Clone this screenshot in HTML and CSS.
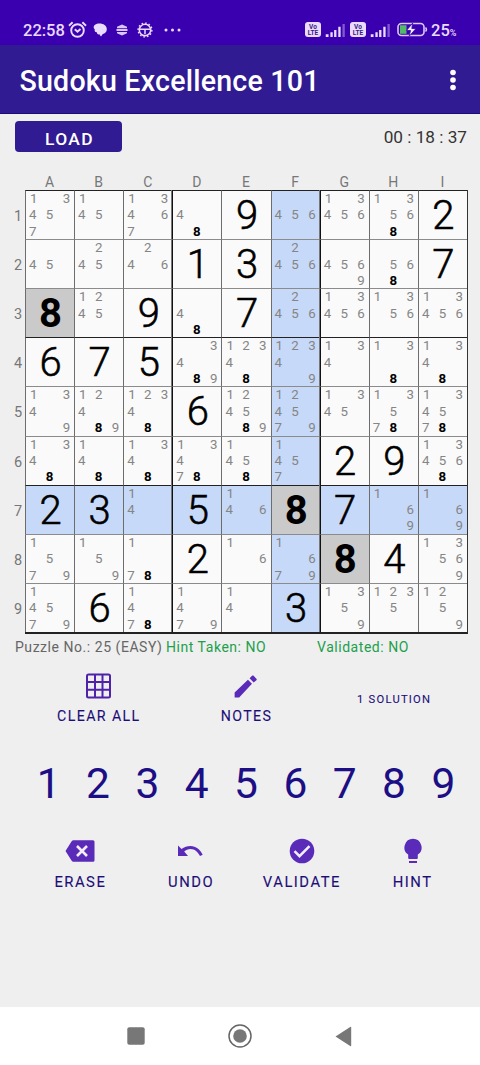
FILE: index.html
```html
<!DOCTYPE html>
<html lang="en">
<head>
<meta charset="utf-8">
<title>Sudoku Excellence 101</title>
<link rel="stylesheet" href="styles.css">
</head>
<body>
<div class="screen">
  <header class="status">
    <div class="status-left">
      <span class="clock">22:58</span>
      <svg class="i-alarm" width="19" height="18" viewBox="0 0 19 18" fill="none" stroke="#eadcff" stroke-width="1.9"><circle cx="9.5" cy="9.5" r="6.3"/><path d="M1 4.7L4.6 1.3M14.4 1.3L18 4.7M6.8 8.2l2.7 2.6 3-2.8"/></svg>
      <svg class="i-chat" width="14" height="14" viewBox="0 0 14 14" fill="#eadcff"><path d="M4 .8C9-.3 13.700 2 13.800 6c.1 3-2 4.500-4 5L8 13.500 6.300 11.300C5 11.800 3.800 10.800 3.800 9.300 2 9.300 1.200 7.800 1.800 6.300 0 5 0 2 4 .8z"/></svg>
      <svg class="i-stack" width="12" height="12" viewBox="0 0 12 12" fill="#d9c5fb"><path d="M6 .5l5 2.200v1.500H1V2.700zM.5 5h11v2H.5zM1 8h10v1.300L6 11.500 1 9.300z"/></svg>
      <svg class="i-gear" width="16" height="16" viewBox="0 0 16 16" fill="none" stroke="#eadcff"><circle cx="8" cy="8" r="5.700" stroke-width="1.600"/><circle cx="8" cy="8" r="6.900" stroke-width="1.400" stroke-dasharray="1.600 2"/><path d="M3 7.200h10M8 7.200v5" stroke-width="1.500"/></svg>
      <svg class="i-dots" width="17" height="4" viewBox="0 0 17 4" fill="#eadcff"><circle cx="2" cy="2" r="1.500"/><circle cx="8.500" cy="2" r="1.500"/><circle cx="15" cy="2" r="1.500"/></svg>
    </div>
    <div class="status-right">
      <span class="volte"><b>Vo</b><b>LTE</b></span>
      <svg class="signal" width="21" height="14" viewBox="0 0 21 14" fill="#eadcff"><path d="M0 11h3v3H0zM5 9h2.500v5H5zM9 6.500h2.500V14H9zM13.500 3H16v11h-2.500z"/><path d="M18 0h2.500v14H18z" opacity=".4"/></svg>
      <span class="volte"><b>Vo</b><b>LTE</b></span>
      <svg class="signal" width="21" height="14" viewBox="0 0 21 14" fill="#eadcff"><path d="M0 11h3v3H0zM5 9h2.500v5H5zM9 6.500h2.500V14H9zM13.500 3H16v11h-2.500z"/><path d="M18 0h2.500v14H18z" opacity=".4"/></svg>
      <svg class="battery" width="31" height="15" viewBox="0 0 31 15"><rect x="1" y="1.500" width="26" height="12" rx="3.500" fill="none" stroke="#d9caf5" stroke-width="1.600"/><path d="M3 3.200h6.500v8.600H3z" fill="#55b768"/><path d="M28.500 5.500q1.800 2 0 4" stroke="#d9caf5" stroke-width="1.500" fill="none"/><path d="M15.700 1L9.500 8.500h4l-1.300 5.800L19 6.500h-4.200z" fill="#f4edff" stroke="#3a00b0" stroke-width=".8"/></svg>
      <span class="charge">25<small>%</small></span>
    </div>
  </header>
  <div class="appbar">
    <h1>Sudoku Excellence 101</h1>
    <svg width="6" height="22" viewBox="0 0 6 22" fill="#fff"><circle cx="3" cy="3.500" r="2.800"/><circle cx="3" cy="11" r="2.800"/><circle cx="3" cy="18.500" r="2.800"/></svg>
  </div>
  <div class="toolbar">
    <button class="load">LOAD</button>
    <span class="timer">00 : 18 : 37</span>
  </div>
  <div class="play">
    <div class="cols" id="cols"></div>
    <div class="rows" id="rows"></div>
    <div class="board" id="board"></div>
  </div>
  <div class="info">
    <span class="puzzle">Puzzle No.: 25 (EASY)</span>
    <span class="hint-taken">Hint Taken: NO</span>
    <span class="validated">Validated: NO</span>
  </div>
  <div class="actions top">
    <div class="action">
      <svg width="26" height="26" viewBox="0 0 26 26" fill="none" stroke="#4f22ab" stroke-width="2"><rect x="1" y="1.500" width="23" height="23" rx="1.500"/><path d="M9 1.500v23M16.500 1.500v23M1 9h23M1 16.700h23"/></svg>
      <span>CLEAR ALL</span>
    </div>
    <div class="action">
      <svg width="26" height="26" viewBox="0 0 24 24" fill="#5a2ab8"><path d="M1.500 22.500v-4.500L13.800 6.300l3.700 3.700L5.700 22.500zM15.300 4.900l2.300-2.300c.4-.4 1-.4 1.400 0l2.600 2.600c.4.400.4 1 0 1.400L19.100 8.700z"/></svg>
      <span>NOTES</span>
    </div>
    <div class="action solution"><span>1 SOLUTION</span></div>
  </div>
  <div class="pad"><span>1</span><span>2</span><span>3</span><span>4</span><span>5</span><span>6</span><span>7</span><span>8</span><span>9</span></div>
  <div class="actions bottom">
    <div class="action">
      <svg width="30" height="26" viewBox="0 0 30 26"><path d="M8.500 2.200H28q1.500 0 1.500 1.500v18.500q0 1.500-1.500 1.500H8.500Q7.300 23.700 6.500 22.500L.5 13l6-9.500q.8-1.300 2-1.300z" fill="#5a2ab8"/><path d="M12 8l10 10M22 8L12 18" stroke="#f3eefb" stroke-width="2.600"/></svg>
      <span>ERASE</span>
    </div>
    <div class="action">
      <svg width="28" height="26" viewBox="0 0 28 26"><path d="M1 7.500l3.500 3.400C7.300 9.200 10 8 13.500 8c5.500 0 9.800 3.700 12.200 8.700l-2.700 1.300c-2.200-4.200-5.200-7-9.500-7-2.600 0-4.500.9-6.300 2.400L11 18H1z" fill="#5a2ab8"/></svg>
      <span>UNDO</span>
    </div>
    <div class="action">
      <svg width="26" height="26" viewBox="0 0 26 26"><circle cx="13" cy="13" r="12.300" fill="#5a2ab8"/><path d="M5.500 13.200l5 5L20.500 8.200" stroke="#f3eefb" stroke-width="2.500" fill="none"/></svg>
      <span>VALIDATE</span>
    </div>
    <div class="action">
      <svg width="18" height="26" viewBox="0 0 18 26" fill="#5a2ab8"><path d="M9 .8a8.600 8.600 0 0 0-4.800 15.700V20q0 1 1 1h7.600q1 0 1-1v-3.500A8.600 8.600 0 0 0 9 .8zM5 23h8v2H5z"/></svg>
      <span>HINT</span>
    </div>
  </div>
  <nav class="navbar">
    <svg width="18" height="18" viewBox="0 0 18 18"><rect x=".3" y=".3" width="17.400" height="17.400" rx="2" fill="#777"/></svg>
    <svg width="24" height="24" viewBox="0 0 24 24"><circle cx="12" cy="12" r="11" fill="none" stroke="#666" stroke-width="1.500"/><circle cx="12" cy="12" r="6.800" fill="#777"/></svg>
    <svg width="17" height="21" viewBox="0 0 17 21"><path d="M.5 10.500L15.200.9q1-.5 1 .5v18.200q0 1-1 .5z" fill="#777"/></svg>
  </nav>
</div>
<script src="board.js"></script>
</body>
</html>
```
FILE: styles.css
```css
* { box-sizing: border-box; }
body { margin: 0; font-family: Roboto, "Liberation Sans", sans-serif; background: #efefef; }
.screen { width: 480px; height: 1065px; display: flex; flex-direction: column; overflow: hidden; }

.status { height: 45px; flex: none; background: #3a00b0; color: #eadcff; display: flex; justify-content: space-between; padding: 14px 23px 0; }
.status-left, .status-right { display: flex; align-items: center; height: 31px; }
.clock { font-size: 16.5px; font-weight: 500; width: 44px; padding-top: 1px; }
.i-alarm { margin-left: 1px; }
.i-chat { margin-left: 6px; }
.i-stack { margin-left: 9px; }
.i-gear { margin-left: 9px; }
.i-dots { margin-left: 11px; }
.volte { width: 16px; height: 15px; border-radius: 3px; background: #eadcff; color: #3a1a80; display: flex; flex-direction: column; align-items: center; justify-content: center; font-size: 6.5px; line-height: 6px; }
.signal { margin: 0 4px; padding-top: 1px; }
.battery { margin-left: 2px; }
.charge { margin-left: 3px; font-size: 16.500px; font-weight: 500; width: 26px; white-space: nowrap; padding-top: 1px; }
.charge small { font-size: 9px; }

.appbar { height: 69px; flex: none; background: #301b92; border-bottom: 1px solid #1e0a78; display: flex; align-items: center; justify-content: space-between; padding: 2px 24px 0 19.5px; }
.appbar h1 { margin: 0; padding-top: 2px; color: #fff; font-size: 28.6px; font-weight: 500; line-height: 34px; letter-spacing: .2px; white-space: nowrap; }

.toolbar { height: 60px; flex: none; display: flex; justify-content: space-between; align-items: flex-start; padding: 7px 13px 0 15px; }
.load { width: 107px; height: 31px; padding: 5px 0 0 2px; border: 0; border-radius: 4px; background: #301b92; color: #fff; font: 500 17.4px/27px Roboto, sans-serif; letter-spacing: 1.4px; }
.timer { font-size: 17.2px; line-height: 33px; color: #333; white-space: pre; }

.play { flex: none; display: grid; grid-template-columns: 25px 443px; grid-template-rows: 16px 444px; }
.cols { grid-column: 2; display: grid; grid-template-columns: repeat(9, 1fr); text-align: center; font-size: 14px; line-height: 17px; color: #777; padding-right: 1px; }
.rows { grid-column: 1; grid-row: 2; display: grid; grid-template-rows: repeat(9, 1fr); align-items: center; padding: 2px 0 0 14px; font-size: 14.500px; color: #777; }
.board { grid-column: 2; grid-row: 2; display: grid; grid-template: repeat(9, 1fr) / repeat(9, 1fr); border-right: 1px solid #333; border-bottom: 2px solid #222; }
.cell { border-left: 1px solid #6d6d6d; border-top: 1px solid #8b8b8b; background: #fafafa; display: flex; min-width: 0; min-height: 0; }
.cell.box-x { border-left-color: #111; box-shadow: -1px 0 0 #777; }
.cell.box-y { border-top-color: #222; }
.cell.lit { background: #c7d9f8; }
.cell.match { background: #cacaca; }
.digit { margin: auto; padding: 2px 0 0 1px; font-size: 40px; font-weight: 300; line-height: 42px; color: #000; -webkit-text-stroke: .55px #000; }
.match .digit { font-weight: 700; -webkit-text-stroke: 0; }
.notes { flex: 1; display: grid; grid-template: repeat(3, 16.4px) / repeat(3, 1fr); padding: 0 4px 0 3px; font-size: 13.3px; line-height: 16.500px; color: #858585; text-align: center; }
.notes .l { text-align: left; }
.notes .one { padding-left: 1px; }
.notes .r { text-align: right; }
.notes .hot { color: #000; font-weight: 700; }

.info { height: 30px; flex: none; display: grid; grid-template-columns: 151px 151px 1fr; padding-left: 15px; font-size: 14px; line-height: 27px; letter-spacing: .54px; white-space: nowrap; color: #21a04c; }
.puzzle { color: #666; }

.actions { flex: none; display: grid; color: #1c0e78; }
.action { display: flex; flex-direction: column; align-items: center; }
.action span { font-size: 14.2px; line-height: 18px; letter-spacing: 1.4px; margin-top: 8px; -webkit-text-stroke: .1px; }
.top { height: 88px; padding: 9px 12px 0 25px; grid-template-columns: repeat(3, 1fr); }
.solution span { font-size: 11.2px; margin-top: 18px; letter-spacing: 1.25px; }
.pad { flex: none; height: 75px; margin-top: 7px; padding: 0 12px 0 24px; display: grid; grid-template-columns: repeat(9, 1fr); text-align: center; font-size: 42.5px; line-height: 50px; color: #1c0e85; }
.bottom { height: 120px; flex: 1; padding: 4px 12px 0 25px; grid-template-columns: repeat(4, 1fr); }
.bottom .action span { font-size: 14.8px; line-height: 21px; letter-spacing: 1.5px; }

.navbar { height: 58px; flex: none; background: #fff; display: flex; align-items: center; justify-content: space-between; padding: 0 128px 0 127px; }
```
FILE: board.js
```js
// One entry per cell: "=n" is a placed digit, otherwise the list of notes.
const grid = [
  "13457 145 13467 48 =9 456 13456 13568 =2",
  "45 245 246 =1 =3 2456 4569 568 =7",
  "=8 1245 =9 48 =7 2456 13456 1356 13456",
  "=6 =7 =5 3489 12348 12349 134 138 1348",
  "1349 12489 12348 =6 124589 124579 1345 13578 134578",
  "1348 148 1348 13478 1458 1457 =2 =9 134568",
  "=2 =3 14 =5 146 =8 =7 169 169",
  "1579 159 178 =2 16 1679 =8 =4 13569",
  "14579 =6 1478 1479 14 =3 1359 1235 1259"
];
const selectedRow = 6, selectedCol = 5, selectedDigit = "8";

const add = (parent, className, text) => {
  const el = document.createElement("div");
  el.className = className;
  if (text) el.textContent = text;
  parent.appendChild(el);
  return el;
};

for (const letter of "ABCDEFGHI") add(document.getElementById("cols"), "label", letter);
for (const n of "123456789") add(document.getElementById("rows"), "label", n);

const board = document.getElementById("board");
grid.forEach((line, r) => line.split(" ").forEach((value, c) => {
  let cls = "cell";
  if (c === 3 || c === 6) cls += " box-x";
  if (r % 3 === 0) cls += " box-y";
  if (r === selectedRow || c === selectedCol) cls += " lit";
  if (value === "=" + selectedDigit) cls += " match";
  const cell = add(board, cls);
  if (value[0] === "=") {
    add(cell, "digit", value[1]);
    return;
  }
  const notes = add(cell, "notes");
  for (let n = 1; n <= 9; n++) {
    const on = value.includes(n);
    let side = ["l", "m", "r"][(n - 1) % 3];
    if (n === 1) side += " one";
    if (on && n == selectedDigit) side += " hot";
    add(notes, side, on ? String(n) : "");
  }
}));
```
